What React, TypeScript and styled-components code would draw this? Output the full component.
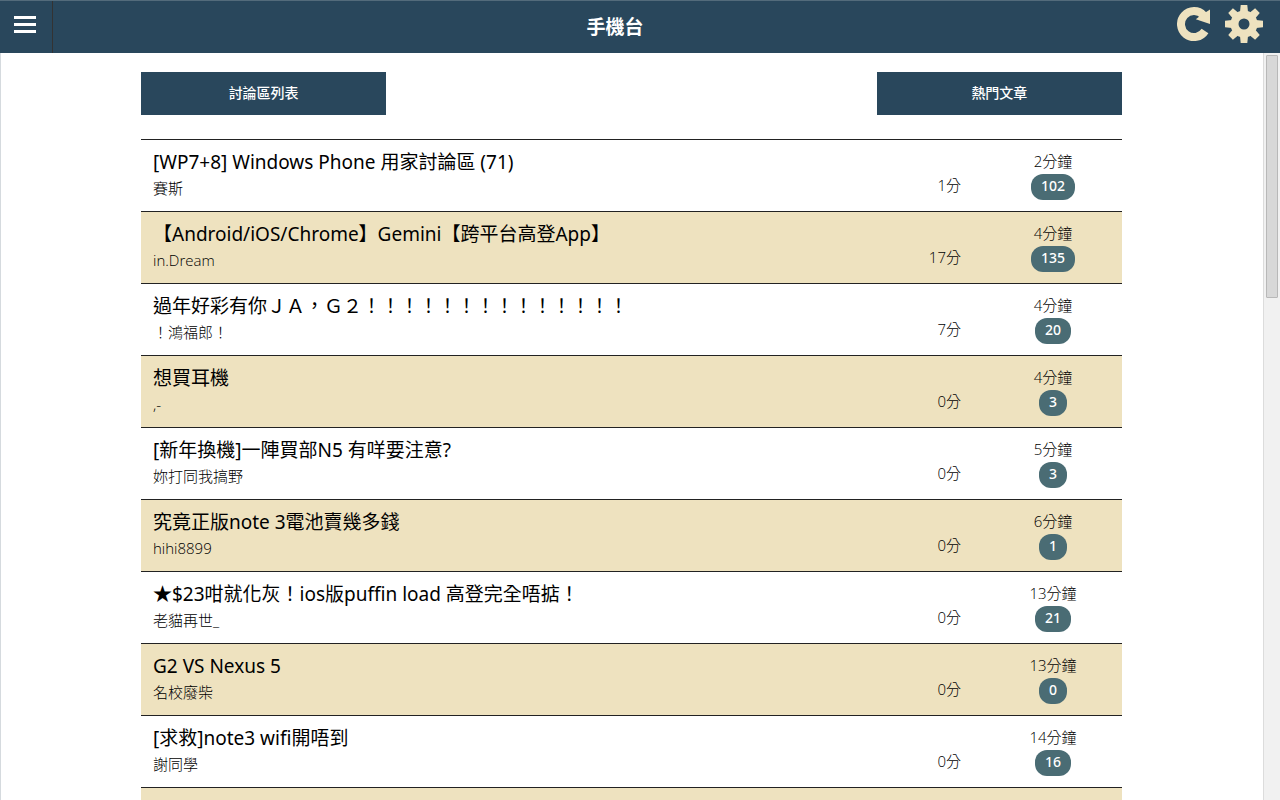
import React from "react";
import styled, { createGlobalStyle, css } from "styled-components";

const navy = "#29475c";
const sand = "#eee2bf";
const teal = "#4a6c74";
const lightFont = `"Open Sans", "Noto Sans CJK TC", sans-serif`;

const GlobalStyle = createGlobalStyle`
  *, *::before, *::after { box-sizing: border-box; }
  body {
    margin: 0;
    background: #fff;
    color: #111;
    font-family: "Noto Sans", "Noto Sans CJK TC", sans-serif;
  }
`;

const Page = styled.div`
  display: flex;
  flex-direction: column;
  height: 100vh;
  overflow: hidden;
`;

const Header = styled.header`
  display: flex;
  flex: none;
  height: 53px;
  background: ${navy};
  border-top: 1px solid #536b7b;
`;

const MenuButton = styled.button`
  display: flex;
  align-items: center;
  justify-content: center;
  width: 53px;
  padding: 0 3px 4px 0;
  border: 0;
  border-right: 1px solid #333;
  background: none;
  cursor: pointer;
`;

const Title = styled.h1`
  flex: 1;
  margin: 0;
  color: #fff;
  font-size: 19px;
  line-height: 52px;
  font-weight: 700;
  text-align: center;
`;

const Actions = styled.div`
  display: flex;
  align-items: flex-start;
  gap: 12px;
  padding: 3px 16px 0 0;
`;

const IconButton = styled.button`
  padding: 0;
  border: 0;
  background: none;
  color: ${sand};
  cursor: pointer;
  svg { display: block; }
`;

const Body = styled.div`
  display: flex;
  flex: 1;
  min-height: 0;
  border-left: 1px solid #d5dade;
`;

const Main = styled.main`
  flex: 1;
  min-width: 0;
  padding: 19px 141px 0 140px;
  overflow: hidden;
`;

const Toolbar = styled.nav`
  display: flex;
  justify-content: space-between;
  margin-bottom: 24px;
`;

const NavButton = styled.button`
  width: 25%;
  height: 43px;
  padding: 0 0 4px;
  border: 0;
  background: ${navy};
  color: #fff;
  font-family: inherit;
  font-size: 14px;
  font-weight: 500;
  cursor: pointer;
`;

const List = styled.ul`
  margin: 0;
  padding: 0;
  list-style: none;
`;

const Row = styled.li<{ $shaded: boolean }>`
  display: grid;
  grid-template-columns: 1fr 96px 138px;
  height: 72px;
  border-top: 1px solid #222;
  ${(p) => p.$shaded && css`background: ${sand};`}
`;

const Topic = styled.div`
  padding: 9px 0 0 12px;
  white-space: nowrap;
`;

const TopicLink = styled.a`
  display: block;
  color: #000;
  font-size: 19px;
  line-height: 27px;
  text-decoration: none;
`;

const smallText = css`
  color: #000;
  font-family: ${lightFont};
  font-size: 15px;
  font-weight: 300;
  line-height: 25px;
`;

const Author = styled.div`
  ${smallText}
`;

const Score = styled.div`
  ${smallText}
  padding: 33px 23px 0 0;
  text-align: right;
`;

const Activity = styled.div`
  display: flex;
  flex-direction: column;
  align-items: center;
  padding-top: 9px;
`;

const Age = styled.time`
  ${smallText}
`;

const Badge = styled.span`
  padding: 0 10px 2px;
  border-radius: 12px;
  background: ${teal};
  color: #fff;
  font-size: 14px;
  line-height: 24px;
  font-weight: 500;
`;

const ScrollTrack = styled.div`
  flex: none;
  width: 17px;
  padding: 2px 2px 0;
  border-left: 1px solid #dcdcdc;
  background: #f1f1f1;
`;

const ScrollThumb = styled.div`
  height: 243px;
  border: 1px solid #b8b8b8;
  border-radius: 1px;
  background: #d8d8d8;
`;

const threads = [
  { title: "[WP7+8] Windows Phone 用家討論區 (71)", author: "賽斯", score: 1, age: 2, replies: 102 },
  { title: "【Android/iOS/Chrome】Gemini【跨平台高登App】", author: "in.Dream", score: 17, age: 4, replies: 135 },
  { title: "過年好彩有你ＪＡ，Ｇ２！！！！！！！！！！！！！！", author: "！鴻福郎！", score: 7, age: 4, replies: 20 },
  { title: "想買耳機", author: ",-", score: 0, age: 4, replies: 3 },
  { title: "[新年換機]一陣買部N5 有咩要注意?", author: "妳打同我搞野", score: 0, age: 5, replies: 3 },
  { title: "究竟正版note 3電池賣幾多錢", author: "hihi8899", score: 0, age: 6, replies: 1 },
  { title: "★$23咁就化灰！ios版puffin load 高登完全唔掂！", author: "老貓再世_", score: 0, age: 13, replies: 21 },
  { title: "G2 VS Nexus 5", author: "名校廢柴", score: 0, age: 13, replies: 0 },
  { title: "[求救]note3 wifi開唔到", author: "謝同學", score: 0, age: 14, replies: 16 },
];

const teeth = [0, 45, 90, 135, 180, 225, 270, 315];

export default function App() {
  return (
    <Page>
      <GlobalStyle />
      <Header>
        <MenuButton aria-label="選單">
          <svg width="22" height="18" viewBox="0 0 22 18" fill="#fff">
            <rect width="22" height="3" />
            <rect y="7" width="22" height="3" />
            <rect y="14" width="22" height="3" />
          </svg>
        </MenuButton>
        <Title>手機台</Title>
        <Actions>
          <IconButton aria-label="重新整理">
            <svg width="35" height="38" viewBox="0 0 35 38" fill="none">
              <path d="M28 27 A13 13 0 1 1 26.5 11.2" stroke="currentColor" strokeWidth="8" />
              <path d="M33 5.5 V20 L18.8 15.3 L23 12 Z" fill="currentColor" />
            </svg>
          </IconButton>
          <IconButton aria-label="設定">
            <svg width="40" height="40" viewBox="-20 -20 40 40" fill="currentColor">
              <path fillRule="evenodd" d="M0 -13.5 A13.5 13.5 0 1 1 0 13.5 A13.5 13.5 0 1 1 0 -13.5 Z M0 -5.5 A5.5 5.5 0 1 0 0 5.5 A5.5 5.5 0 1 0 0 -5.5 Z" />
              {teeth.map((a) => (
                <path key={a} transform={`rotate(${a})`} d="M-4 -12 L-3.3 -19 H3.3 L4 -12 Z" />
              ))}
            </svg>
          </IconButton>
        </Actions>
      </Header>
      <Body>
        <Main>
          <Toolbar>
            <NavButton>討論區列表</NavButton>
            <NavButton>熱門文章</NavButton>
          </Toolbar>
          <List>
            {threads.map((t, i) => (
              <Row key={t.title} $shaded={i % 2 === 1}>
                <Topic>
                  <TopicLink href="#">{t.title}</TopicLink>
                  <Author>{t.author}</Author>
                </Topic>
                <Score>{t.score}分</Score>
                <Activity>
                  <Age>{t.age}分鐘</Age>
                  <Badge>{t.replies}</Badge>
                </Activity>
              </Row>
            ))}
            <Row $shaded />
          </List>
        </Main>
        <ScrollTrack>
          <ScrollThumb />
        </ScrollTrack>
      </Body>
    </Page>
  );
}
